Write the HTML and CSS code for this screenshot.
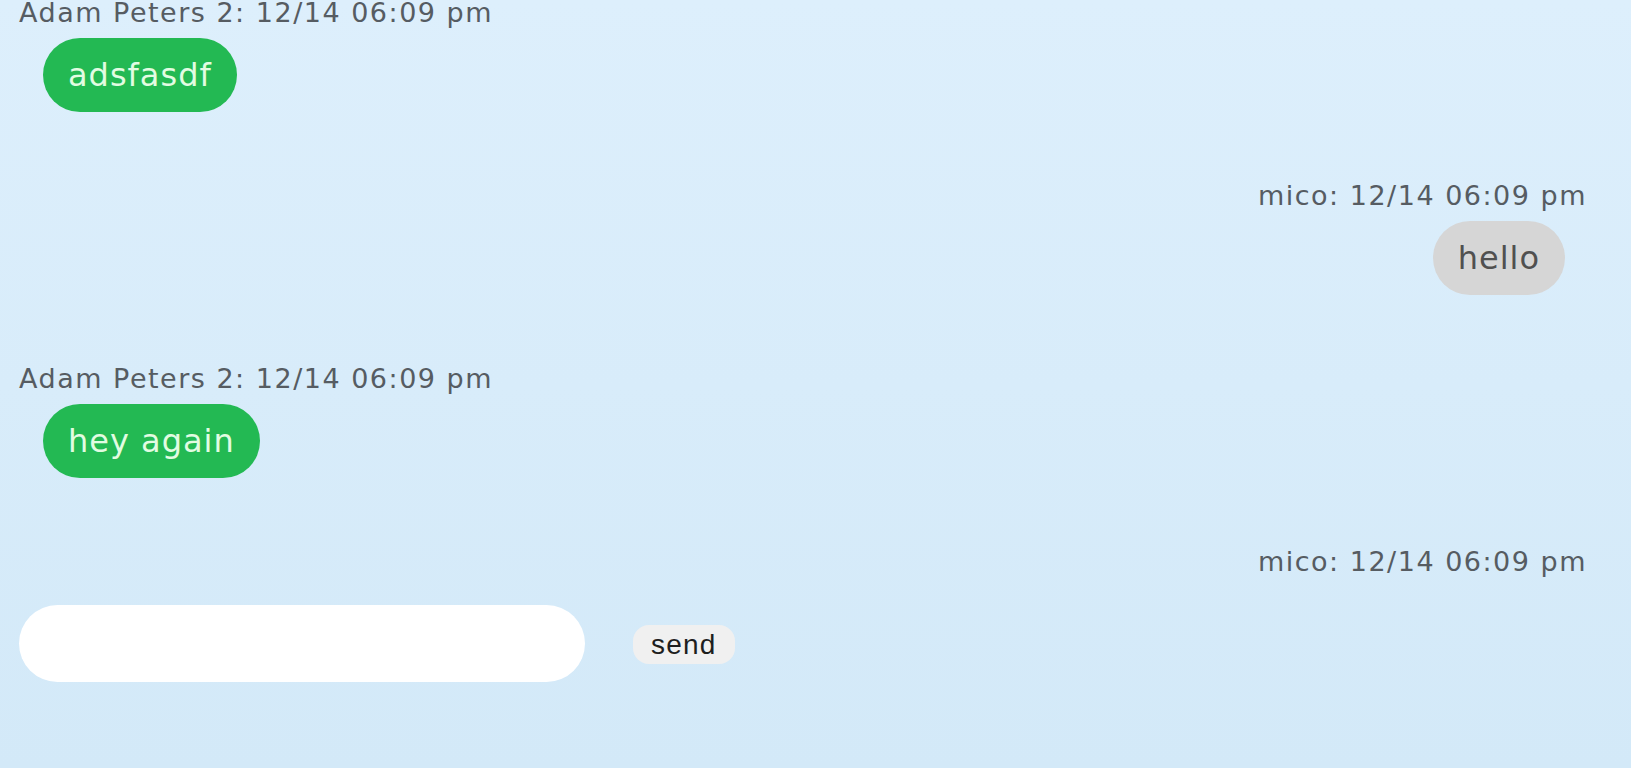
FILE: index.html
```html
<!DOCTYPE html>
<html lang="en">
<head>
<meta charset="utf-8">
<title>Chat</title>
<link rel="stylesheet" href="styles.css">
</head>
<body>
<div class="chat">
  <div class="msg msg-in">
    <div class="meta">Adam Peters 2: 12/14 06:09 pm</div>
    <div class="bubble bubble-in">adsfasdf</div>
  </div>
  <div class="msg msg-out">
    <div class="meta">mico: 12/14 06:09 pm</div>
    <div class="bubble bubble-out">hello</div>
  </div>
  <div class="msg msg-in">
    <div class="meta">Adam Peters 2: 12/14 06:09 pm</div>
    <div class="bubble bubble-in">hey again</div>
  </div>
  <div class="msg msg-out msg-last">
    <div class="meta">mico: 12/14 06:09 pm</div>
  </div>
  <form class="composer">
    <input class="composer-input" type="text">
    <button class="send" type="button">send</button>
  </form>
</div>
</body>
</html>
```
FILE: styles.css
```css
html, body {
  margin: 0;
  height: 100%;
}
body {
  background: linear-gradient(#ddeffc, #d3e9f8);
  font-family: "DejaVu Sans", Verdana, sans-serif;
  overflow: hidden;
}
.chat {
  display: flex;
  flex-direction: column;
  padding: 0 44px 0 19px;
}
.msg {
  display: flex;
  flex-direction: column;
  margin-bottom: 71px;
}
.msg-in { align-items: flex-start; }
.msg-out { align-items: flex-end; }
.msg-last { margin-bottom: 30px; }
.meta {
  font-size: 27px;
  line-height: 26px;
  letter-spacing: 1.5px;
  color: #565c62;
}
.bubble {
  margin-top: 12px;
  height: 74px;
  line-height: 74px;
  padding: 0 25px;
  border-radius: 37px;
  font-size: 32px;
  letter-spacing: 1px;
  box-sizing: border-box;
}
.bubble-in {
  margin-left: 24px;
  background: #23b953;
  color: #e2fce2;
}
.bubble-out {
  margin-right: 22px;
  background: #d6d6d6;
  color: #505050;
}
.composer {
  display: flex;
  align-items: center;
  gap: 48px;
  margin: 0;
}
.composer-input {
  width: 566px;
  height: 77px;
  box-sizing: border-box;
  border: none;
  border-radius: 39px;
  background: #fff;
  outline: none;
  padding: 0 30px;
  font-size: 26px;
  margin: 0;
}
.send {
  height: 39px;
  padding: 0 18px;
  border: none;
  border-radius: 16px;
  background: #f0f0f0;
  color: #1e1e1e;
  font-family: "Liberation Sans", Arial, sans-serif;
  font-size: 28px;
  letter-spacing: 1.2px;
  line-height: 39px;
  margin-top: 2px;
}
```
